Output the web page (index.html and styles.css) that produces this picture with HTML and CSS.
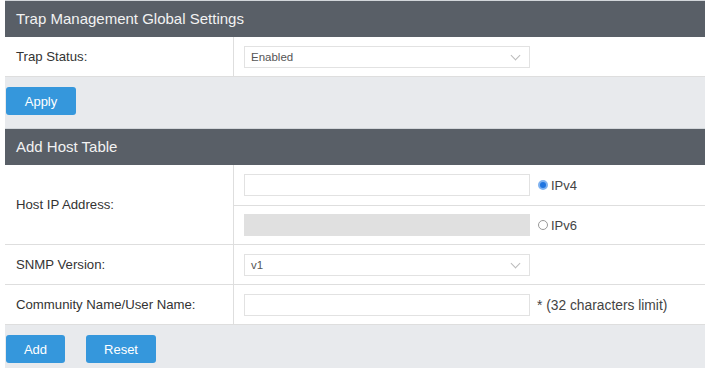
FILE: index.html
```html
<!DOCTYPE html>
<html lang="en">
<head>
    <meta charset="UTF-8">
    <title>Trap Management</title>
    <link rel="stylesheet" href="styles.css">
</head>
<body>
<div id="page">
    <div class="panel-head">Trap Management Global Settings</div>
    <div class="row">
        <div class="label">Trap Status:</div>
        <div class="field">
            <div class="select">Enabled<span class="arrow"></span></div>
        </div>
    </div>
    <div class="actions">
        <button class="btn btn-apply">Apply</button>
    </div>

    <div class="panel-head">Add Host Table</div>
    <div class="row">
        <div class="label">Host IP Address:</div>
        <div class="field-group">
            <div class="field first">
                <input type="text" class="text">
                <label class="radio"><span class="dot on"></span>IPv4</label>
            </div>
            <div class="field sub">
                <input type="text" class="text" disabled>
                <label class="radio"><span class="dot"></span>IPv6</label>
            </div>
        </div>
    </div>
    <div class="row">
        <div class="label">SNMP Version:</div>
        <div class="field">
            <div class="select">v1<span class="arrow"></span></div>
        </div>
    </div>
    <div class="row">
        <div class="label">Community Name/User Name:</div>
        <div class="field">
            <input type="text" class="text">
            <span class="note">* (32 characters limit)</span>
        </div>
    </div>
    <div class="actions">
        <button class="btn btn-add">Add</button>
        <button class="btn btn-reset">Reset</button>
    </div>
</div>
</body>
</html>
```
FILE: styles.css
```css
* {
    margin: 0;
    padding: 0;
    box-sizing: border-box;
}
body {
    background-color: #fff;
    font-family: "Liberation Sans", Arial, sans-serif;
    color: #333;
}
#page {
    width: 700px;
    margin-left: 5px;
    background-color: #e8eaed;
}
.panel-head {
    height: 37px;
    border-top: 1px solid #d2d6da;
    background-color: #595f67;
    color: #f2f2f2;
    font-size: 15px;
    line-height: 35px;
    padding-left: 11px;
}
.row {
    display: flex;
    background-color: #fff;
    border-bottom: 1px solid #dedede;
}
.label {
    width: 229px;
    flex-shrink: 0;
    border-right: 1px solid #dedede;
    padding-left: 11px;
    font-size: 13.2px;
    display: flex;
    align-items: center;
}
.field-group {
    flex: 1;
}
.field {
    flex: 1;
    display: flex;
    align-items: center;
    padding: 9px 10px 8px;
}
.field.first {
    padding-bottom: 9px;
}
.field.sub {
    border-top: 1px solid #dedede;
    padding-top: 8px;
}
.select {
    position: relative;
    width: 286px;
    height: 22px;
    border: 1px solid #e2e2e2;
    padding-left: 6px;
    font-size: 11.5px;
    line-height: 20px;
    color: #555;
}
.arrow {
    position: absolute;
    right: 10px;
    top: 5px;
    width: 7px;
    height: 7px;
    border-right: 1px solid #bbb;
    border-bottom: 1px solid #bbb;
    transform: rotate(45deg);
}
.text {
    width: 286px;
    height: 22px;
    border: 1px solid #e2e2e2;
    background-color: #fff;
    outline: none;
}
.text:disabled {
    border-color: #e0e0e0;
    background-color: #e0e0e0;
}
.radio {
    display: flex;
    align-items: center;
    margin-left: 8px;
    font-size: 13px;
    color: #444;
}
.dot {
    width: 10px;
    height: 10px;
    margin-right: 3px;
    border: 1px solid #999;
    border-radius: 50%;
}
.dot.on {
    border: 2px solid #7fb2f0;
    background-color: #1f74e0;
}
.note {
    margin-left: 7px;
    font-size: 13.8px;
    color: #444;
}
.actions {
    display: flex;
    gap: 21px;
    padding: 10px 1px 13px;
}
.actions:first-of-type {
    padding-bottom: 14px;
}
.btn {
    height: 28px;
    border: none;
    border-radius: 3px;
    background-color: #3597dc;
    color: #fff;
    font-family: "Liberation Sans", Arial, sans-serif;
    font-size: 13px;
}
.btn-apply {
    width: 70px;
}
.btn-add {
    width: 59px;
}
.btn-reset {
    width: 70px;
}
```
